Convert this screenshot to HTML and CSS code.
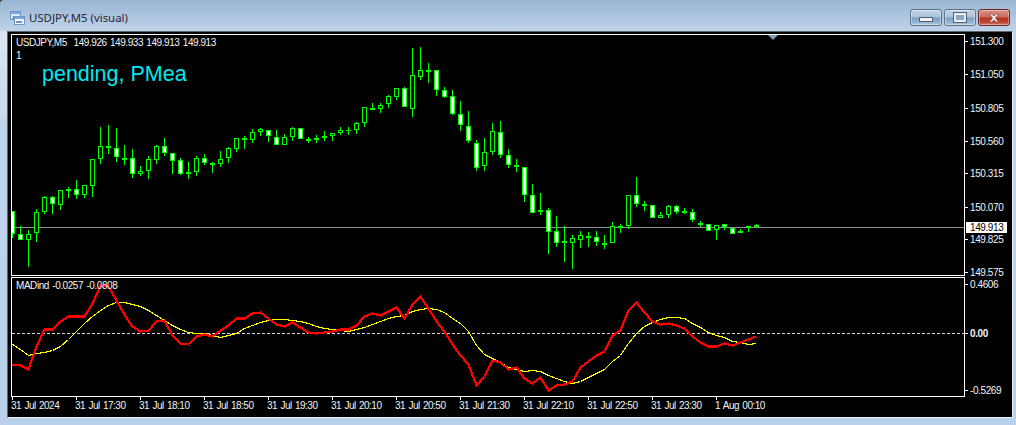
FILE: index.html
```html
<!DOCTYPE html>
<html lang="en">
<head>
<meta charset="utf-8">
<title>USDJPY,M5 (visual)</title>
<link rel="stylesheet" href="styles.css">
</head>
<body>
<div class="window">
  <header class="titlebar">
    <svg class="app-icon" width="15" height="14" viewBox="0 0 15 14" shape-rendering="crispEdges">
      <rect x="0.500" y="0.500" width="10" height="8" fill="#dfeaf8" stroke="#6f97c6"/>
      <rect x="1" y="1" width="9" height="2" fill="#7fa6d6"/>
      <path d="M2 7h1V5h1v2h1V5h1v2h2" stroke="#5a86bb" fill="none"/>
      <rect x="4.500" y="5.500" width="10" height="8" fill="#f2f7fd" stroke="#6f97c6"/>
      <rect x="5" y="6" width="9" height="2" fill="#7fa6d6"/>
      <path d="M6 10l1 2 1-2 1 2 1-2 1 2 1-2" stroke="#4e7fb8" fill="none" shape-rendering="auto"/>
    </svg>
    <span class="title-text">USDJPY,M5 (visual)</span>
    <div class="buttons">
      <button class="btn" aria-label="Minimize"><span class="glyph-min"></span></button>
      <button class="btn" aria-label="Maximize"><span class="glyph-max"></span></button>
      <button class="btn btn-close" aria-label="Close">
        <svg width="14" height="10" viewBox="0 0 14 10"><path d="M2.500 1h2.600L7 3.200 8.900 1h2.600L8.500 5l3 4H8.900L7 6.800 5.100 9H2.500l3-4z" fill="#f4f4f4" stroke="#7c4a44" stroke-width=".7"/></svg>
      </button>
    </div>
  </header>
  <main class="client">
    <div class="row">
      <div class="plot plot-main">
        <svg id="main-svg" class="canvas" width="952" height="240" viewBox="12 35 952 240"></svg>
        <div class="info">USDJPY,M5&nbsp; 149.926 149.933 149.913 149.913</div>
        <div class="info info-second">1</div>
        <div class="pending">pending, PMea</div>
        <div class="shift-mark"></div>
      </div>
      <div class="axis" id="price-axis"></div>
    </div>
    <div class="row row-sub">
      <div class="plot plot-sub">
        <svg id="sub-svg" class="canvas" width="952" height="118" viewBox="12 278 952 118"></svg>
        <div class="info">MADind -0.0257 -0.0808</div>
      </div>
      <div class="axis" id="sub-axis"></div>
    </div>
    <div class="times">
      <span class="time">31 Jul 2024</span>
      <span class="time">31 Jul 17:30</span>
      <span class="time">31 Jul 18:10</span>
      <span class="time">31 Jul 18:50</span>
      <span class="time">31 Jul 19:30</span>
      <span class="time">31 Jul 20:10</span>
      <span class="time">31 Jul 20:50</span>
      <span class="time">31 Jul 21:30</span>
      <span class="time">31 Jul 22:10</span>
      <span class="time">31 Jul 22:50</span>
      <span class="time">31 Jul 23:30</span>
      <span class="time">1 Aug 00:10</span>
    </div>
  </main>
</div>
<script src="chart.js"></script>
</body>
</html>
```
FILE: styles.css
```css
* { box-sizing: border-box; }
html, body { margin: 0; padding: 0; background: #3a3a3a; }
body { width: 1016px; height: 425px; overflow: hidden; font-family: "Liberation Sans", Arial, sans-serif; }

.window {
  width: 1016px;
  height: 425px;
  display: flex;
  flex-direction: column;
  border-top-left-radius: 4px;
  padding: 0 3px 7px 7px;
  background:
    linear-gradient(180deg, #dbe6f2, #c6d9ec) 0 31px / 7px 90px no-repeat,
    linear-gradient(180deg, #9ab6d4 0, #aac3dd 14px, #bdd3e9 31px, #b9d1ea 100%);
}

.titlebar {
  height: 31px;
  flex: none;
  display: flex;
  align-items: flex-start;
}
.app-icon { margin: 11px 0 0 3px; }
.title-text {
  margin: 10px 0 0 4px;
  font: 11.4px/16px "Noto Sans", "Open Sans", sans-serif;
  color: #2a2438;
}
.buttons { margin-left: auto; margin-top: 9px; margin-right: 3px; display: flex; gap: 2px; }
.btn {
  width: 32px;
  height: 17px;
  padding: 0;
  display: flex;
  align-items: center;
  justify-content: center;
  border: 1px solid #5f7588;
  border-radius: 3px;
  background: linear-gradient(180deg, #c3d6e8 0, #a9c2dc 45%, #7f9fc0 55%, #8fb0d0 80%, #b2cbe2 100%);
  box-shadow: inset 0 0 0 1px rgba(255, 255, 255, .35);
}
.btn-close {
  border-color: #6a2a28;
  background: linear-gradient(180deg, #dd9187 0, #cd6a5c 45%, #b43222 55%, #bd4433 80%, #d47b68 100%);
}
.glyph-min { display: block; width: 14px; height: 5px; margin-top: 4px; border: 1px solid #56606c; background: #eef2f6; }
.glyph-max { display: block; width: 12px; height: 9px; border: 2px solid #e8eef4; outline: 1px solid #56606c; background: #8fa9c4; }

.client {
  flex: 1;
  background: #000;
  border-left: 1px solid #5c646c;
  border-top: 1px solid #5c646c;
  border-right: 1px solid #f0f4f8;
  border-bottom: 1px solid #f0f4f8;
  padding: 2px 0 0 3px;
  display: flex;
  flex-direction: column;
}

.row { display: flex; height: 242px; flex: none; }
.row-sub { height: 120px; margin-top: 1px; }

.plot {
  position: relative;
  width: 954px;
  flex: none;
  border: 1px solid #fff;
  overflow: hidden;
}
.canvas { display: block; shape-rendering: crispEdges; }

.info {
  position: absolute;
  left: 4px;
  top: 2px;
  font-size: 10px;
  line-height: 12px;
  letter-spacing: -.44px;
  word-spacing: 1px;
  color: #f4f4f4;
  white-space: nowrap;
}
.info-second { top: 15px; }
.pending {
  position: absolute;
  left: 30px;
  top: 26px;
  font-size: 21.5px;
  line-height: 26px;
  color: #00e8f0;
  white-space: nowrap;
}
.shift-mark {
  position: absolute;
  left: 756px;
  top: 0;
  width: 0;
  height: 0;
  border-left: 5px solid transparent;
  border-right: 5px solid transparent;
  border-top: 5px solid #7f9cb4;
}

.axis { position: relative; flex: 1; }
.axis-label {
  position: absolute;
  left: 5px;
  font-size: 10px;
  line-height: 12px;
  letter-spacing: -.4px;
  color: #eef4fa;
  white-space: nowrap;
}
.axis-label::before {
  content: "";
  position: absolute;
  left: -5px;
  top: 5px;
  width: 3px;
  height: 1px;
  background: #fff;
}
.axis-label.current {
  left: 1px;
  width: 41px;
  height: 11px;
  line-height: 11px;
  padding-left: 4px;
  background: #fff;
  color: #000;
}
.axis-label.current::before { display: none; }
.axis-label.bold { font-weight: bold; }

.times { display: flex; flex: 1; }
.time {
  position: relative;
  flex: none;
  width: 64px;
  padding-top: 3px;
  font-size: 10px;
  line-height: 12px;
  letter-spacing: -.5px;
  word-spacing: 1px;
  color: #eef4fa;
  white-space: nowrap;
}
.time::before {
  content: "";
  position: absolute;
  left: 1px;
  top: 0;
  width: 1px;
  height: 3px;
  background: #fff;
}
```
FILE: chart.js
```js
// [high, body top, body bottom, low, bearish]; one candle every 8px from x = 12
var candles = [
[211,211,234,238,1],[226,234,240,240,1],[230,234,240,267,0],[209,212,233,242,0],[196,197,212,214,0],
[196,197,204,214,1],[190,190,205,210,0],[187,189,191,198,1],[180,189,195,199,1],[185,185,195,198,0],
[159,159,186,197,0],[127,146,159,164,0],[125,146,148,154,1],[128,148,157,162,1],[145,158,160,165,1],
[149,158,174,178,1],[166,171,174,176,0],[156,159,171,179,0],[145,146,160,164,0],[138,146,153,156,1],
[153,153,161,174,1],[158,160,174,175,1],[162,172,174,179,1],[156,158,172,176,0],[154,158,163,165,1],
[162,163,165,173,1],[151,159,164,167,0],[147,148,158,163,0],[138,138,149,152,0],[136,138,140,149,1],
[129,132,140,143,0],[128,129,132,136,0],[130,130,136,142,1],[130,137,145,145,1],[134,137,145,145,0],
[127,128,137,141,0],[128,128,139,139,1],[137,139,141,143,1],[135,138,140,143,0],[131,136,138,141,0],
[133,133,136,141,0],[127,130,133,135,0],[127,130,131,135,1],[122,123,130,134,0],[107,107,123,127,0],
[103,108,110,110,1],[103,105,109,113,0],[95,96,104,108,0],[88,88,97,100,0],[87,88,107,107,1],
[48,75,109,117,0],[47,70,77,80,0],[63,70,72,83,1],[70,70,90,96,1],[87,90,97,98,1],
[90,96,114,115,1],[101,114,125,131,1],[111,126,141,143,1],[140,143,168,171,1],[138,152,166,171,0],
[123,131,152,155,0],[121,132,155,158,1],[149,155,165,168,1],[159,165,167,172,1],[167,167,195,202,1],
[184,195,213,213,1],[193,210,212,215,0],[208,210,232,254,1],[216,231,243,247,1],[226,241,243,262,0],
[235,238,243,269,0],[231,235,240,248,0],[232,236,238,247,1],[231,237,242,246,1],[235,243,245,249,1],
[222,226,243,243,0],[224,226,228,233,1],[195,195,226,229,0],[177,195,204,207,1],[201,204,206,211,1],
[205,205,218,218,1],[212,215,218,218,0],[205,206,215,218,0],[205,206,212,214,1],[208,211,213,214,1],
[209,212,220,222,1],[221,223,225,227,1],[224,224,231,231,1],[225,225,230,240,0],[224,224,227,230,1],
[228,228,234,234,1],[229,231,233,233,0],[226,226,228,232,0],[224,225,227,227,1]
];

// Indicator lines, y values in thirds of a pixel below y = 275, one per candle
var redLine = [269,272,283,215,162,162,140,125,125,125,85,32,35,76,118,154,168,165,138,137,182,204,207,183,177,185,165,152,131,131,116,113,131,148,153,143,156,172,174,172,170,
162,162,150,124,116,120,110,98,130,88,65,100,140,170,208,240,268,330,305,255,262,284,278,310,325,308,345,330,328,320,278,258,240,228,182,165,105,83,112,140,147,145,
150,160,183,202,214,215,205,210,202,193,185];
var yellowLine = [207,222,241,236,231,226,214,193,170,145,125,105,90,83,82,88,95,106,122,137,150,163,172,176,176,182,186,182,174,160,151,142,135,133,133,135,139,145,155,160,163,
165,169,163,156,149,140,131,123,120,109,102,100,102,112,130,145,170,212,238,250,262,276,282,290,287,289,300,311,320,324,318,307,296,283,260,240,205,175,155,143,132,127,
128,130,145,158,172,180,188,198,203,208,205];

var NS = "http://www.w3.org/2000/svg";
function el(parent, name, attrs) {
  var node = document.createElementNS(NS, name);
  for (var key in attrs) node.setAttribute(key, attrs[key]);
  parent.appendChild(node);
  return node;
}
function box(parent, x, y, w, h, fill) {
  el(parent, "rect", { x: x, y: y, width: w, height: h, fill: fill });
}

var main = document.getElementById("main-svg");
box(main, 12, 227, 952, 1, "#8e8e96");
candles.forEach(function (c, i) {
  var cx = 12 + 8 * i;
  box(main, cx, c[0], 1, c[3] - c[0], "#00ff00");
  box(main, cx - 2, c[1], 5, c[2] - c[1], "#00ff00");
  if (c[2] - c[1] > 2) {
    box(main, cx - 1, c[1] + 1, 3, c[2] - c[1] - 2, c[4] ? "#ffffff" : "#000000");
  }
});

var sub = document.getElementById("sub-svg");
for (var x = 12; x < 964; x += 5) box(sub, x, 333, 3, 1, "#d8d8d8");
function line(values, color, width, start) {
  var pts = values.map(function (v, i) {
    return (start + 8 * i + 0.5) + "," + (Math.floor(275 + v / 3) + 0.5);
  }).join(" ");
  el(sub, "polyline", { points: pts, fill: "none", stroke: color, "stroke-width": width, "stroke-linejoin": "round" });
}
line(yellowLine, "#ffff00", 1.1, 12);
line(redLine, "#ff0000", 2.2, 12);

function labels(id, items) {
  var axis = document.getElementById(id);
  items.forEach(function (it) {
    var s = document.createElement("span");
    s.className = "axis-label" + (it[2] ? " " + it[2] : "");
    s.textContent = it[0];
    s.style.top = it[1] + "px";
    axis.appendChild(s);
  });
}
labels("price-axis", [
  ["151.300", 2], ["151.050", 35], ["150.805", 69], ["150.560", 102],
  ["150.315", 134], ["150.070", 168], ["149.825", 200], ["149.575", 233],
  ["149.913", 188, "current"]
]);
labels("sub-axis", [["0.4606", 2], ["0.00", 51, "bold"], ["-0.5269", 108]]);
```
